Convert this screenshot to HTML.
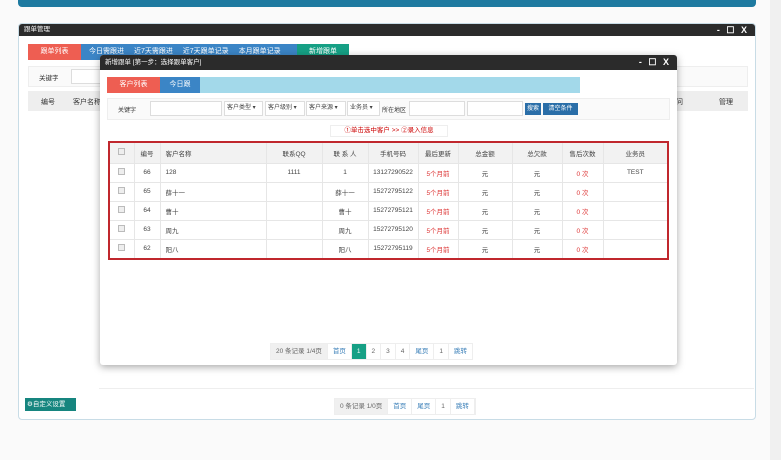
<!DOCTYPE html>
<html><head><meta charset="utf-8"><style>
*{box-sizing:border-box;margin:0;padding:0}
body{width:781px;height:460px;overflow:hidden;background:#fafafa;font-family:"Liberation Sans","Noto Sans CJK SC",sans-serif;font-size:7px;color:#333;position:relative}
.a{position:absolute}
.tb{background:#2b2b2b;color:#fff;font-size:6.5px;line-height:13px;padding-left:5px}
.ctl{position:absolute;right:6px;top:0;color:#fff;font-size:9px;font-weight:bold;letter-spacing:2px}
.tab{position:absolute;color:#fff;text-align:center;font-size:7px;line-height:16px}
.inp{position:absolute;background:#fff;border:1px solid #ddd;height:15px}
.dd{position:absolute;border:1px solid #ddd;background:#fff;height:15px;line-height:13px;font-size:6px;padding-left:2px;color:#444}
table{border-collapse:collapse;width:100%;font-size:6.5px}
td,th{border-right:1px solid #e6e6e6;border-bottom:1px solid #e6e6e6;height:19px;text-align:center;font-weight:normal;color:#444}
th{background:#f2f2f2;height:20px}
.cb{display:inline-block;width:7px;height:7px;border:1px solid #bbb;background:#eee}
.l{text-align:left;padding-left:5px}
.r{color:#d33}
.pg{position:absolute;display:flex;height:17px;border:1px solid #eee;background:#fff;font-size:6.5px;line-height:15px}
.pg span{padding:0 5px;border-right:1px solid #eee;color:#3a7fb8}
</style></head><body>
<div class="a" style="left:18px;top:0;width:738px;height:7px;background:#1e7aa0;border-radius:0 0 4px 4px"></div>
<div class="a" style="left:770px;top:0;width:11px;height:460px;background:#f0f0f0"></div>

<!-- outer window -->
<div class="a" style="left:18px;top:23px;width:738px;height:397px;background:#fff;border:1px solid #c8dce6;border-radius:4px;overflow:hidden">
 <div class="tb" style="height:12px;line-height:12px">跟单管理<span class="ctl">- ☐ X</span></div>
 <div class="tab" style="left:9px;top:20px;width:53px;background:#ee5e52">跟单列表</div>
 <div class="tab" style="left:62px;top:20px;width:216px;background:#3b85c6;text-align:left;padding-left:8px;word-spacing:8px">今日需跟进 近7天需跟进 近7天跟单记录 本月跟单记录</div>
 <div class="tab" style="left:278px;top:20px;width:52px;background:#16a085">新增跟单</div>
 <div class="a" style="left:9px;top:42px;width:720px;height:21px;border:1px solid #eee;background:#fafafa"></div>
 <div class="a" style="left:20px;top:48px;font-size:6.5px">关键字</div>
 <div class="inp" style="left:52px;top:45px;width:60px"></div>
 <div class="a" style="left:9px;top:67px;width:720px;height:20px;background:#eee"></div>
 <div class="a" style="left:22px;top:73px">编号</div>
 <div class="a" style="left:54px;top:73px">客户名称</div>
 <div class="a" style="left:657px;top:73px">问</div>
 <div class="a" style="left:700px;top:73px">管理</div>
 <div class="a" style="left:80px;top:364px;width:655px;height:1px;background:#eee"></div>
 <div class="a" style="left:6px;top:374px;width:51px;height:13px;background:#16857f;color:#fff;font-size:6.5px;line-height:13px;padding-left:2px">⚙自定义设置</div>
 <div class="pg" style="left:315px;top:374px"><span style="background:#f0f0f0;color:#666">0 条记录 1/0页</span><span>首页</span><span>尾页</span><span style="color:#666">1</span><span>跳转</span></div>
</div>

<!-- modal -->
<div class="a" style="left:100px;top:55px;width:577px;height:310px;background:#fff;border-radius:3px;box-shadow:0 2px 8px rgba(0,0,0,.35);overflow:hidden">
 <div class="tb" style="height:15px;line-height:15px">新增跟单 [第一步：选择跟单客户]<span class="ctl" style="line-height:15px">- ☐ X</span></div>
 <div class="tab" style="left:7px;top:22px;width:53px;background:#ee5e52">客户列表</div>
 <div class="tab" style="left:60px;top:22px;width:40px;background:#3b85c6">今日跟</div>
 <div class="a" style="left:100px;top:22px;width:380px;height:16px;background:#a3d9ea"></div>
 <div class="a" style="left:7px;top:43px;width:563px;height:22px;border:1px solid #eee;background:#fafafa"></div>
 <div class="a" style="left:18px;top:50px;font-size:6px">关键字</div>
 <div class="inp" style="left:50px;top:46px;width:72px"></div>
 <div class="dd" style="left:124px;top:46px;width:39px">客户类型 ▾</div>
 <div class="dd" style="left:165px;top:46px;width:40px">客户级别 ▾</div>
 <div class="dd" style="left:206px;top:46px;width:40px">客户来源 ▾</div>
 <div class="dd" style="left:247px;top:46px;width:33px">业务员 ▾</div>
 <div class="a" style="left:282px;top:50px;font-size:6px">所在地区</div>
 <div class="inp" style="left:309px;top:46px;width:56px"></div>
 <div class="inp" style="left:367px;top:46px;width:56px"></div>
 <div class="a" style="left:425px;top:48px;width:16px;height:12px;background:#2a6ea8;color:#fff;font-size:6px;line-height:12px;text-align:center">搜索</div>
 <div class="a" style="left:443px;top:48px;width:35px;height:12px;background:#2a6ea8;color:#fff;font-size:6px;line-height:12px;text-align:center">清空条件</div>
 <div class="a" style="left:230px;top:70px;width:118px;height:12px;border:1px solid #eee;color:#c00;font-size:6.5px;line-height:10px;text-align:center">①单击选中客户 &gt;&gt; ②录入信息</div>
 <div class="a" style="left:8px;top:86px;width:561px;height:119px;border:2px solid #c0272d;overflow:hidden">
  <table>
   <tr><th style="width:24px"><span class="cb"></span></th><th style="width:26px">编号</th><th class="l" style="width:106px">客户名称</th><th style="width:56px">联系QQ</th><th style="width:46px">联 系 人</th><th style="width:50px">手机号码</th><th style="width:40px">最后更新</th><th style="width:54px">总金额</th><th style="width:50px">总欠款</th><th style="width:41px">售后次数</th><th style="border-right:0">业务员</th></tr>
   <tr><td><span class="cb"></span></td><td>66</td><td class="l">128</td><td>1111</td><td>1</td><td>13127290522</td><td class="r">5个月前</td><td>元</td><td>元</td><td class="r">0 次</td><td style="border-right:0">TEST</td></tr>
   <tr><td><span class="cb"></span></td><td>65</td><td class="l">薛十一</td><td></td><td>薛十一</td><td>15272795122</td><td class="r">5个月前</td><td>元</td><td>元</td><td class="r">0 次</td><td style="border-right:0"></td></tr>
   <tr><td><span class="cb"></span></td><td>64</td><td class="l">曹十</td><td></td><td>曹十</td><td>15272795121</td><td class="r">5个月前</td><td>元</td><td>元</td><td class="r">0 次</td><td style="border-right:0"></td></tr>
   <tr><td><span class="cb"></span></td><td>63</td><td class="l">周九</td><td></td><td>周九</td><td>15272795120</td><td class="r">5个月前</td><td>元</td><td>元</td><td class="r">0 次</td><td style="border-right:0"></td></tr>
   <tr><td><span class="cb"></span></td><td>62</td><td class="l">阳八</td><td></td><td>阳八</td><td>15272795119</td><td class="r">5个月前</td><td>元</td><td>元</td><td class="r">0 次</td><td style="border-right:0"></td></tr>
  </table>
 </div>
 <div class="pg" style="left:170px;top:288px"><span style="background:#f0f0f0;color:#666">20 条记录 1/4页</span><span>首页</span><span style="background:#16a085;color:#fff">1</span><span style="color:#666">2</span><span style="color:#666">3</span><span style="color:#666">4</span><span>尾页</span><span style="color:#666">1</span><span style="border:0">跳转</span></div>
</div>
</body></html>
